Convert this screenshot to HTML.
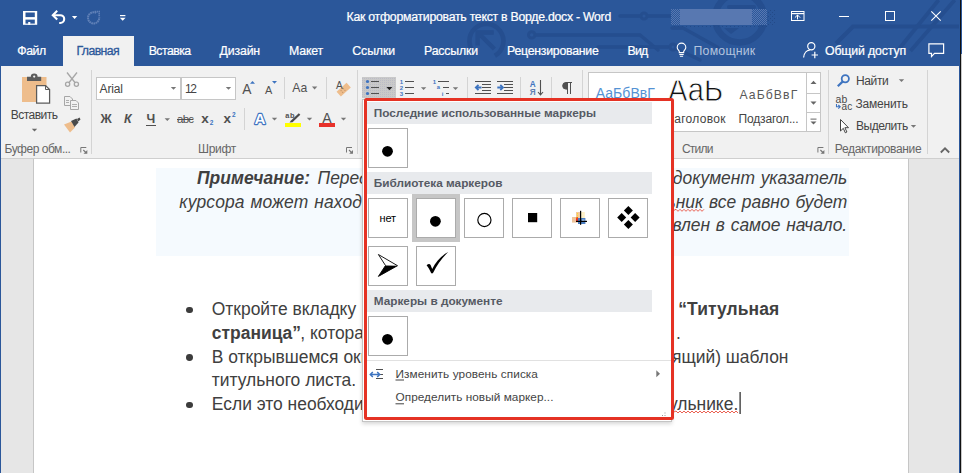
<!DOCTYPE html>
<html><head><meta charset="utf-8"><title>Word</title>
<style>
html,body{margin:0;padding:0;}
body{width:962px;height:473px;overflow:hidden;position:relative;background:#e6e6e6;font-family:"Liberation Sans",sans-serif;}
.a{position:absolute;}
.t{position:absolute;white-space:pre;line-height:1;font-family:"Liberation Sans",sans-serif;}
svg{position:absolute;overflow:visible;}
.doc{position:absolute;white-space:pre;line-height:1;font-size:17.45px;color:#404040;font-family:"Liberation Sans",sans-serif;}
.thumb{position:absolute;width:38px;height:38px;border:1px solid #ababab;background:#fff;}
.hdr{position:absolute;left:367px;width:285px;height:22px;background:#e8eaed;}
.vsep{position:absolute;width:1px;background:#d2d2d2;}

</style></head><body>
<!-- window chrome -->
<div class="a" style="left:0;top:0;width:962px;height:66px;background:#2b579a"></div>
<svg style="left:0;top:0" width="962" height="66" viewBox="0 0 962 66">
<defs>
<pattern id="chk" width="2" height="2" patternUnits="userSpaceOnUse"><rect width="2" height="2" fill="#2b579a"/><rect width="1" height="1" fill="#5878b1"/><rect x="1" y="1" width="1" height="1" fill="#5878b1"/></pattern>
<pattern id="chk2" width="4" height="4" patternUnits="userSpaceOnUse"><rect width="1" height="1" fill="#234a88"/><rect x="2" y="2" width="1" height="1" fill="#234a88"/></pattern>
<clipPath id="tclip"><rect x="1" y="0" width="958" height="66"/></clipPath>
</defs>
<!-- decorative background pattern -->
<g clip-path="url(#tclip)" fill="none" stroke="#254e8f" stroke-width="4" stroke-linecap="round">
<path d="M494.9 55.7 A17 17 0 1 0 475.5 54" stroke-width="4.6" stroke-linecap="butt"/>
<path d="M494.4 49 L479 33.8 M477.6 45.5 V32.5 H493.8" stroke-width="4.4" stroke-linecap="butt" stroke-linejoin="miter"/>
<circle cx="531.7" cy="34.9" r="3.2" stroke-width="3"/>
<path d="M536 35 H640 L658 50" stroke-width="3.5"/>
<circle cx="644" cy="16" r="3" stroke-width="3"/>
<path d="M620 16 H640 M648 16 H671" stroke-width="3.5"/>
<path d="M598 47 H668" stroke-width="3.5"/>
<circle cx="673" cy="47" r="3" stroke-width="3"/>
<circle cx="739.6" cy="18" r="24.5" stroke-width="6.5"/>
<path d="M729 7 H754" stroke-width="4"/>
<path d="M724 28 L731 34 L739 28z" fill="#254e8f" stroke="none"/>
<path d="M672 28 H683 L718 47.5" stroke-width="3.5"/>
<path d="M676 48.5 L700 60" stroke-width="3.5"/>
<path d="M836 43.5 L853 26.5 H962" stroke-width="4" stroke-linecap="butt"/>
<path d="M897.3 51 L938.6 0" stroke-width="3.8" stroke-linecap="butt"/>
<path d="M910.5 51 L954.7 0" stroke-width="3.8" stroke-linecap="butt"/>
<path d="M0 33 H20 L40 50" stroke-width="3" opacity="0"/>
</g>
<!-- user name smudge -->
<rect x="671" y="9" width="9" height="16" fill="url(#chk)"/>
<rect x="680" y="9" width="72" height="16" fill="#5878b1"/>
<rect x="752" y="9" width="15" height="16" fill="url(#chk)"/>
<rect x="767" y="10" width="9" height="16" fill="url(#chk2)"/>
<rect x="674" y="25" width="93" height="2" fill="url(#chk2)"/>
<!-- SAVE -->
<rect x="23" y="11" width="14.2" height="13.8" fill="#fff"/>
<rect x="25.5" y="12.5" width="9.3" height="4.6" fill="#2b579a"/>
<rect x="25.5" y="19.6" width="9.3" height="4" fill="#2b579a"/>
<rect x="28.2" y="22" width="2.1" height="2.8" fill="#fff"/>
<!-- UNDO -->
<g fill="none" stroke="#fff" stroke-width="2.1">
<path d="M57.2 10.8 L52.8 15.2 L57.2 19.6"/>
<path d="M53.4 15.2 H60.3 a3.9 3.9 0 0 1 3.9 3.9 a3.9 3.9 0 0 1 -3.9 3.9 H59.2"/>
</g>
<path d="M71.9 15.9 h5.4 l-2.7 3z" fill="#fff"/>
<!-- REDO disabled -->
<g fill="none" stroke="#6080b7" stroke-width="2" stroke-dasharray="1.7 0.5">
<path d="M96.2 12.9 A5.6 5.6 0 1 0 99.2 17.3"/>
</g>
<path d="M94.6 11.6 h4.6 v4.6" fill="none" stroke="#6080b7" stroke-width="1.6" stroke-dasharray="1.4 0.6"/>
<!-- customize -->
<rect x="120" y="15" width="5.4" height="1.2" fill="#fff"/>
<path d="M119.8 17.8 h5.8 l-2.9 3z" fill="#fff"/>
<!-- ribbon display options -->
<g fill="none" stroke="#fff" stroke-width="1">
<rect x="791.5" y="11.5" width="12.5" height="9"/>
<path d="M791.5 13.6 H804" stroke-width="1.2"/>
<path d="M797.5 19.4 V15 M794.9 17.6 L797.5 15 L800.1 17.6"/>
</g>
<!-- min / max / close -->
<rect x="839" y="16" width="10" height="1" fill="#fff"/>
<rect x="885.5" y="11.5" width="9" height="9" fill="none" stroke="#fff" stroke-width="1"/>
<path d="M931.3 11.3 L940.7 20.7 M940.7 11.3 L931.3 20.7" stroke="#fff" stroke-width="1.1" fill="none"/>
<!-- bulb -->
<g fill="none" stroke="#fff" stroke-width="1.1">
<path d="M679.3 52.6 v-1 c0 -1.2 -2.1 -2.2 -2.1 -4.2 a4.3 4.3 0 0 1 8.6 0 c0 2 -2.1 3 -2.1 4.2 v1z"/>
<path d="M679.3 54.5 h4.4 M679.9 56.3 h3.2"/>
</g>
<!-- person + -->
<g fill="none" stroke="#fff" stroke-width="1.2">
<circle cx="811.3" cy="46.3" r="3.6"/>
<path d="M803.6 57.5 c0.5 -5 3.6 -7.3 6.2 -7.4"/>
<path d="M814.8 51.8 v6.4 M811.6 55 h6.4"/>
</g>
<!-- comment -->
<path d="M928.9 43.9 H943.6 V53.4 H934.5 L931.5 56.6 V53.4 H928.9 Z" fill="none" stroke="#fff" stroke-width="1.2"/>
</svg>

<div class="a" style="left:63px;top:36px;width:71px;height:30px;background:#f1f1f1"></div>
<div class="a" style="left:1px;top:66px;width:958px;height:92px;background:#f1f1f1"></div>
<div class="a" style="left:1px;top:158px;width:958px;height:1px;background:#cfcfcf"></div>
<svg style="left:0;top:0" width="962" height="160" viewBox="0 0 962 160">
<defs>
<pattern id="dots" width="2" height="2" patternUnits="userSpaceOnUse"><rect width="2" height="2" fill="#c9c9c9"/><rect width="1" height="1" fill="#bcbcc6"/></pattern>
</defs>
<!-- group separators -->
<g fill="#d4d4d4">
<rect x="91" y="70" width="1" height="84"/>
<rect x="357" y="70" width="1" height="84"/>
<rect x="582" y="70" width="1" height="84"/>
<rect x="828" y="70" width="1" height="84"/>
<rect x="927" y="70" width="1" height="84"/>
<!-- small separators -->
<rect x="284" y="77" width="1" height="22"/>
<rect x="326" y="77" width="1" height="22"/>
<rect x="244" y="108" width="1" height="22"/>
<rect x="467" y="77" width="1" height="22"/>
<rect x="520" y="77" width="1" height="22"/>
<rect x="551" y="77" width="1" height="22"/>
</g>
<!-- PASTE -->
<g>
<rect x="22" y="77" width="24.5" height="25" fill="#eebd8c"/>
<path d="M27 81 v-4.2 h3.8 a3.4 3.2 0 0 1 6.8 0 h3.6 v4.2z" fill="#5b5b5b"/>
<circle cx="34.2" cy="76.6" r="1.1" fill="#f1f1f1"/>
<path d="M36.6 85.6 h9 l4 4 v13.6 h-13z" fill="#fff" stroke="#5b5b5b" stroke-width="1.25"/>
<path d="M45.5 85.5 v4 h4" fill="none" stroke="#5b5b5b" stroke-width="1"/>
<path d="M31.8 128.8 h5.4 l-2.7 2.8z" fill="#6a6a6a"/>
</g>
<!-- SCISSORS (disabled) -->
<g stroke="#a6a6a6" fill="none" stroke-width="1.3">
<path d="M67 72.5 L75.3 83"/><path d="M77 72.5 L68.7 83"/>
<circle cx="67.6" cy="84.3" r="2.1"/><circle cx="76.4" cy="84.3" r="2.1"/>
</g>
<!-- COPY (disabled) -->
<g stroke="#a6a6a6" fill="#f1f1f1" stroke-width="1">
<path d="M64.5 96.5 h5.5 l2.5 2.5 v6.5 h-8z"/>
<path d="M70.5 100.5 h5.5 l2.5 2.5 v6.5 h-8z"/>
<path d="M66 100.5 h3 M66 102.5 h3 M72 104.5 h5 M72 106.5 h5" stroke-width="0.9"/>
</g>
<!-- FORMAT PAINTER -->
<g>
<path d="M64 124.5 L71.5 121.5 L75 127.5 L70 132.5 Z" fill="#eebd8c"/>
<path d="M71 121 L76.5 118.5 L78.5 122.5 L74.5 127 Z" fill="#4a4a4a"/>
<path d="M77 119 L79.5 117.5 L80.5 119.5 L78.3 121.5 Z" fill="#4a4a4a"/>
</g>
<!-- font boxes -->
<rect x="96.5" y="77.5" width="84" height="22" fill="#fff" stroke="#c6c6c6"/>
<rect x="181.5" y="77.5" width="54" height="22" fill="#fff" stroke="#c6c6c6"/>
<g fill="#777">
<path d="M170.8 87 h5.4 l-2.7 2.8z"/>
<path d="M225.8 87 h5.4 l-2.7 2.8z"/>
<path d="M164.6 118.2 h5.4 l-2.7 2.8z"/>
<path d="M311.9 86.6 h5.4 l-2.7 2.8z"/>
<path d="M271.8 117.8 h5.4 l-2.7 2.8z"/>
<path d="M306.8 117.8 h5.4 l-2.7 2.8z"/>
<path d="M340.8 117.8 h5.4 l-2.7 2.8z"/>
<path d="M420.9 87.2 h5.4 l-2.7 2.8z"/>
<path d="M452.8 87.2 h5.4 l-2.7 2.8z"/>
<path d="M898.8 79.2 h5.4 l-2.7 2.8z"/>
<path d="M910.8 125 h5.4 l-2.7 2.8z"/>
</g>
<!-- grow/shrink font triangles -->
<path d="M250 83.7 L252.5 81 L255 83.7z" fill="#3e74c0"/>
<path d="M272 81 L277 81 L274.5 83.7z" fill="#3e74c0"/>
<!-- clear formatting eraser -->
<g transform="rotate(-42 343.7 89.6)">
<rect x="337" y="86.4" width="13.4" height="6.4" fill="#eebd8c"/>
<rect x="340.5" y="88" width="1.2" height="1.2" fill="#c9996a"/><rect x="343.5" y="88" width="1.2" height="1.2" fill="#c9996a"/><rect x="340.5" y="90.4" width="1.2" height="1.2" fill="#c9996a"/><rect x="343.5" y="90.4" width="1.2" height="1.2" fill="#c9996a"/>
</g>
<!-- text effects A -->
<text x="254.6" y="124" font-family="Liberation Sans, sans-serif" font-size="15.5" font-weight="700" fill="#fff" stroke="#3e74c0" stroke-width="2.3" stroke-linejoin="round" paint-order="stroke" textLength="11" lengthAdjust="spacingAndGlyphs">A</text>

<rect x="146" y="125" width="10" height="1" fill="#505050"/>
<!-- highlight -->
<rect x="285" y="123" width="16" height="4" fill="#ffff00"/>
<path d="M289.5 122.5 L291 120.5 L298.8 113.2 L300.3 114.8 L292.5 122.3 Z" fill="#4a4a4a"/>
<!-- font color -->
<rect x="319" y="123" width="16" height="4" fill="#e8312a"/>
<!-- BULLETS button -->
<rect x="362" y="77" width="34" height="21" fill="url(#dots)"/>
<g fill="#3e74c0"><circle cx="367.5" cy="81.5" r="1.6"/><circle cx="367.5" cy="87.5" r="1.6"/><circle cx="367.5" cy="93.5" r="1.6"/></g>
<g fill="#505050"><rect x="371" y="81" width="8" height="1"/><rect x="371" y="87" width="8" height="1"/><rect x="371" y="93" width="8" height="1"/></g>
<path d="M386.4 87 h6 l-3 3.2z" fill="#222"/>
<!-- NUMBERED -->
<g fill="#505050"><rect x="405" y="81" width="9" height="1"/><rect x="405" y="87" width="9" height="1"/><rect x="405" y="93" width="9" height="1"/></g>
<g fill="#3e74c0" font-family="Liberation Sans, sans-serif" font-size="5.8" font-weight="700">
<text x="399.8" y="83.6" textLength="3.4" lengthAdjust="spacingAndGlyphs">1</text><text x="399.8" y="89.6" textLength="3.4" lengthAdjust="spacingAndGlyphs">2</text><text x="399.8" y="95.6" textLength="3.4" lengthAdjust="spacingAndGlyphs">3</text>
</g>
<!-- MULTILEVEL -->
<g fill="#505050"><rect x="438" y="81" width="11" height="1"/><rect x="443" y="87" width="6" height="1"/><rect x="446" y="93" width="3" height="1"/></g>
<g fill="#3e74c0" font-family="Liberation Sans, sans-serif" font-size="5.8" font-weight="700">
<text x="432.8" y="83.8" textLength="3.4" lengthAdjust="spacingAndGlyphs">1</text><text x="436.8" y="89.4">a</text><text x="441.7" y="95.6">i</text>
</g>
<!-- DEC INDENT -->
<g fill="#505050">
<rect x="475" y="81" width="16" height="1"/><rect x="482" y="84" width="9" height="1"/><rect x="482" y="87" width="9" height="1"/><rect x="482" y="90" width="9" height="1"/><rect x="475" y="93" width="16" height="1"/>
<rect x="497" y="81" width="16" height="1"/><rect x="504" y="84" width="9" height="1"/><rect x="504" y="87" width="9" height="1"/><rect x="504" y="90" width="9" height="1"/><rect x="497" y="93" width="16" height="1"/>
</g>
<g fill="none" stroke="#3e74c0" stroke-width="1.8">
<path d="M481.5 87.5 H476 M478.5 84.8 L475.8 87.5 L478.5 90.2"/>
<path d="M497.3 87.5 H502.8 M500.3 84.8 L503 87.5 L500.3 90.2"/>
</g>
<!-- SORT -->
<g font-family="Liberation Sans, sans-serif" font-size="8.2" font-weight="700">
<text x="529.8" y="86.6" fill="#3e74c0">A</text><text x="529.8" y="95" fill="#5d7fb3">Я</text>
</g>
<path d="M540.5 80 V94.5 M538 92 L540.5 94.8 L543 92" fill="none" stroke="#505050" stroke-width="1.1"/>
<!-- PILCROW -->
<path d="M567.5 82.5 V94 M570.5 82.5 V94 M572 82.5 H566 a3.3 3.3 0 0 0 0 6.6 h1.5 v-6.6z" fill="#505050" stroke="#505050" stroke-width="1"/>
<!-- STYLES gallery -->
<rect x="588.5" y="72.5" width="218" height="59" fill="#fff" stroke="#c6c6c6"/>
<g fill="#fff" stroke="#c6c6c6">
<rect x="806.5" y="72.5" width="14" height="21"/>
<rect x="806.5" y="93.5" width="14" height="19"/>
<rect x="806.5" y="112.5" width="14" height="19"/>
</g>
<g fill="#666">
<path d="M810.5 84 h6 l-3 -3.2z"/>
<path d="M810.5 101.6 h6 l-3 3.2z"/>
<rect x="810.5" y="118.6" width="6" height="1"/>
<path d="M810.5 121.4 h6 l-3 3.2z"/>
</g>
<!-- dialog launchers -->
<path d="M80.8 152.5 v-5 h5.5" fill="none" stroke="#777" stroke-width="1"/><path d="M83.3 150 L86.3 153" fill="none" stroke="#777" stroke-width="1.1"/><path d="M83.5 153.8 h3.8 v-3.8z" fill="#777"/>
<path d="M346.5 152.5 v-5 h5.5" fill="none" stroke="#777" stroke-width="1"/><path d="M349 150 L352 153" fill="none" stroke="#777" stroke-width="1.1"/><path d="M349.2 153.8 h3.8 v-3.8z" fill="#777"/>
<path d="M817.9 152.5 v-5 h5.5" fill="none" stroke="#777" stroke-width="1"/><path d="M820.4 150 L823.4 153" fill="none" stroke="#777" stroke-width="1.1"/><path d="M820.6 153.8 h3.8 v-3.8z" fill="#777"/>
<!-- collapse caret -->
<path d="M940.8 152.5 L945 148.3 L949.2 152.5" fill="none" stroke="#666" stroke-width="1.8"/>
<!-- FIND icon -->
<g fill="none" stroke="#3e74c0" stroke-width="1.8">
<circle cx="845.3" cy="78.7" r="3.6"/><path d="M842.6 81.6 L837.8 86.2" stroke-width="2.2"/>
</g>
<!-- REPLACE icon -->
<g font-family="Liberation Sans, sans-serif" font-size="10" fill="#4a4a4a">
<text x="835.6" y="102.6" textLength="11.6" lengthAdjust="spacingAndGlyphs">ab</text><text x="841.6" y="109.6" textLength="10.6" lengthAdjust="spacingAndGlyphs">ac</text>
</g>
<path d="M836.5 104 v2.8 h3.5 M838.3 105 L840.2 106.8 L838.3 108.6" fill="none" stroke="#3e74c0" stroke-width="1.1"/>
<!-- SELECT cursor -->
<path d="M840.5 119.5 V131 L843.3 128.3 L845.3 132.8 L846.9 132 L844.9 127.7 H848.5 Z" fill="#fff" stroke="#444" stroke-width="1"/>
</svg>

<!-- doc area -->
<div class="a" style="left:33px;top:159px;width:876px;height:314px;background:#fff;border-left:1px solid #c6c6c6;border-right:1px solid #c6c6c6;box-sizing:border-box"></div>
<div class="a" style="left:156px;top:168px;width:693px;height:88px;background:#f5fafe"></div>
<span class="t" style="left:196.9px;top:170.43px;font-size:17.45px;color:#404040;letter-spacing:0.067px;font-weight:700;font-style:italic;">Примечание:</span>
<span class="t" style="left:311.8px;top:170.43px;font-size:17.45px;color:#404040;letter-spacing:0.000px;font-style:italic;word-spacing:0.9px;"> Перед вставкой</span>
<span class="t" style="left:658.0px;top:170.43px;font-size:17.45px;color:#404040;letter-spacing:0.000px;font-style:italic;word-spacing:0.9px;">в документ указатель</span>
<span class="t" style="left:179.3px;top:193.63px;font-size:17.45px;color:#404040;letter-spacing:0.000px;font-style:italic;word-spacing:0.9px;letter-spacing:0.12px;">курсора может находиться в</span>
<span class="t" style="left:609.8px;top:193.63px;font-size:17.45px;color:#404040;letter-spacing:0.000px;font-style:italic;word-spacing:0.9px;">титульник все равно будет</span>
<span class="t" style="left:633.6px;top:216.83px;font-size:17.45px;color:#404040;letter-spacing:0.000px;font-style:italic;word-spacing:0.9px;">добавлен в самое начало.</span>
<span class="t" style="left:211.8px;top:301.33px;font-size:17.45px;color:#404040;letter-spacing:0.000px;">Откройте вкладку</span>
<span class="t" style="left:678.3px;top:301.33px;font-size:17.45px;color:#404040;letter-spacing:0.092px;font-weight:700;">“Титульная</span>
<span class="t" style="left:211.8px;top:324.93px;font-size:17.45px;color:#404040;letter-spacing:0.000px;font-weight:700;">страница”</span>
<span class="t" style="left:300.3px;top:324.93px;font-size:17.45px;color:#404040;letter-spacing:0.000px;">, которая находится</span>
<span class="t" style="left:676.1px;top:324.93px;font-size:17.45px;color:#404040;letter-spacing:0.000px;">.</span>
<span class="t" style="left:211.8px;top:348.53px;font-size:17.45px;color:#404040;letter-spacing:0.000px;">В открывшемся окне выберите</span>
<span class="t" style="left:615.0px;top:348.53px;font-size:17.45px;color:#404040;letter-spacing:0.000px;">подходящий) шаблон</span>
<span class="t" style="left:211.8px;top:372.13px;font-size:17.45px;color:#404040;letter-spacing:0.000px;">титульного листа.</span>
<span class="t" style="left:211.8px;top:395.73px;font-size:17.45px;color:#404040;letter-spacing:0.000px;">Если это необходимо, измените</span>
<span class="t" style="left:628.9px;top:395.73px;font-size:17.45px;color:#404040;letter-spacing:0.000px;">в титульнике.</span>
<svg style="left:0;top:0" width="962" height="473" viewBox="0 0 962 473">
<path d="M674 210.3 L676 209.3 L678 211.3 L680 209.3 L682 211.3 L684 209.3 L686 211.3 L688 209.3 L690 211.3 L692 209.3 L694 211.3 L696 209.3 L698 211.3 L700 209.3 L702 211.3 L704 209.3" fill="none" stroke="#e8503f" stroke-width="0.9"/>
<path d="M674 412 L676 411 L678 413 L680 411 L682 413 L684 411 L686 413 L688 411 L690 413 L692 411 L694 413 L696 411 L698 413 L700 411 L702 413 L704 411 L706 413 L708 411 L710 413 L712 411 L714 413 L716 411 L718 413 L720 411 L722 413 L724 411 L726 413 L728 411 L730 413 L732 411 L734 413 L736 411 L738 413" fill="none" stroke="#e8503f" stroke-width="0.9"/>
<rect x="739.5" y="392" width="1.2" height="22" fill="#222"/>
</svg>
<!-- doc bullets -->
<div class="a" style="left:186px;top:306.5px;width:6.8px;height:6.8px;border-radius:50%;background:#3c3c3c"></div>
<div class="a" style="left:186px;top:354px;width:6.8px;height:6.8px;border-radius:50%;background:#3c3c3c"></div>
<div class="a" style="left:186px;top:401.5px;width:6.8px;height:6.8px;border-radius:50%;background:#3c3c3c"></div>
<!-- window borders -->
<div class="a" style="left:0;top:0;width:1px;height:473px;background:#2b579a"></div>
<div class="a" style="left:959px;top:0;width:1px;height:473px;background:#2b579a"></div>
<div class="a" style="left:960px;top:0;width:1px;height:473px;background:#111"></div>
<div class="a" style="left:961px;top:54px;width:1px;height:419px;background:#c8c8c8"></div>

<span class="t" style="left:346.6px;top:10.99px;font-size:12.3px;color:#fff;letter-spacing:-0.269px;-webkit-text-stroke:0.22px #fff;">Как отформатировать текст в Ворде.docx - Word</span>
<span class="t" style="left:17.3px;top:45.39px;font-size:12.3px;color:#fff;letter-spacing:-0.484px;-webkit-text-stroke:0.22px #fff;">Файл</span>
<span class="t" style="left:76.5px;top:45.39px;font-size:12.3px;color:#2b579a;letter-spacing:-0.616px;-webkit-text-stroke:0.3px #2b579a;">Главная</span>
<span class="t" style="left:148.7px;top:45.39px;font-size:12.3px;color:#fff;letter-spacing:-0.546px;-webkit-text-stroke:0.22px #fff;">Вставка</span>
<span class="t" style="left:219.6px;top:45.39px;font-size:12.3px;color:#fff;letter-spacing:-0.157px;-webkit-text-stroke:0.22px #fff;">Дизайн</span>
<span class="t" style="left:289.0px;top:45.39px;font-size:12.3px;color:#fff;letter-spacing:-0.163px;-webkit-text-stroke:0.22px #fff;">Макет</span>
<span class="t" style="left:352.3px;top:45.39px;font-size:12.3px;color:#fff;letter-spacing:-0.099px;-webkit-text-stroke:0.22px #fff;">Ссылки</span>
<span class="t" style="left:424.0px;top:45.39px;font-size:12.3px;color:#fff;letter-spacing:-0.150px;-webkit-text-stroke:0.22px #fff;">Рассылки</span>
<span class="t" style="left:507.0px;top:45.39px;font-size:12.3px;color:#fff;letter-spacing:-0.247px;-webkit-text-stroke:0.22px #fff;">Рецензирование</span>
<span class="t" style="left:627.5px;top:45.39px;font-size:12.3px;color:#fff;letter-spacing:-0.750px;-webkit-text-stroke:0.22px #fff;">Вид</span>
<span class="t" style="left:693.5px;top:45.39px;font-size:12.3px;color:#b4c4de;letter-spacing:0.232px;">Помощник</span>
<span class="t" style="left:825.0px;top:45.39px;font-size:12.3px;color:#fff;letter-spacing:-0.135px;-webkit-text-stroke:0.22px #fff;">Общий доступ</span>
<span class="t" style="left:10.8px;top:109.24px;font-size:12px;color:#444;letter-spacing:-0.534px;">Вставить</span>
<span class="t" style="left:4.5px;top:143.04px;font-size:12px;color:#666;letter-spacing:-0.465px;">Буфер обм...</span>
<span class="t" style="left:198.0px;top:143.04px;font-size:12px;color:#666;letter-spacing:-0.297px;">Шрифт</span>
<span class="t" style="left:682.0px;top:143.04px;font-size:12px;color:#666;letter-spacing:-0.796px;">Стили</span>
<span class="t" style="left:834.8px;top:143.04px;font-size:12px;color:#666;letter-spacing:-0.352px;">Редактирование</span>
<span class="t" style="left:99.5px;top:83.04px;font-size:12px;color:#444;letter-spacing:-0.123px;">Arial</span>
<span class="t" style="left:185.0px;top:83.04px;font-size:12px;color:#444;letter-spacing:-1.330px;">12</span>
<span class="t" style="left:855.9px;top:75.24px;font-size:12px;color:#444;letter-spacing:-0.350px;">Найти</span>
<span class="t" style="left:855.5px;top:98.04px;font-size:12px;color:#444;letter-spacing:-0.217px;">Заменить</span>
<span class="t" style="left:856.0px;top:120.24px;font-size:12px;color:#444;letter-spacing:-0.457px;">Выделить</span>
<span class="t" style="left:595.7px;top:86.35px;font-size:14px;color:#5492d4;letter-spacing:0.051px;">АаБбВвГ</span>
<span class="t" style="left:739.4px;top:89.17px;font-size:12.2px;color:#595959;letter-spacing:1.109px;">АаБбВвГ</span>
<span class="t" style="left:666.6px;top:113.04px;font-size:12px;color:#444;letter-spacing:0.320px;">Заголовок</span>
<span class="t" style="left:738.6px;top:113.04px;font-size:12px;color:#444;letter-spacing:-0.177px;">Подзагол...</span>
<span class="t" style="left:668.3px;top:73.14px;font-size:33.5px;color:#111;letter-spacing:0.000px;clip-path:inset(7.7px 0 0 0);-webkit-text-stroke:0.8px #fff;transform-origin:0 0;transform:scaleX(0.8699);">АаБ</span>
<span class="t" style="left:242.2px;top:82.72px;font-size:13.8px;color:#505050;letter-spacing:0.397px;">A</span>
<span class="t" style="left:265.1px;top:85.17px;font-size:10.9px;color:#505050;letter-spacing:0.734px;">A</span>
<span class="t" style="left:292.3px;top:82.17px;font-size:12.2px;color:#505050;letter-spacing:-0.011px;">Aa</span>
<span class="t" style="left:336.0px;top:80.83px;font-size:10px;color:#505050;letter-spacing:-0.172px;">A</span>
<span class="t" style="left:100.6px;top:113.30px;font-size:12.4px;color:#505050;letter-spacing:1.197px;font-weight:700;">Ж</span>
<span class="t" style="left:124.0px;top:113.30px;font-size:12.4px;color:#505050;letter-spacing:1.275px;font-weight:700;font-style:italic;">К</span>
<span class="t" style="left:146.6px;top:113.30px;font-size:12.4px;color:#505050;letter-spacing:-0.119px;font-weight:700;">Ч</span>
<span class="t" style="left:177.0px;top:114.07px;font-size:11.5px;color:#505050;letter-spacing:-0.716px;text-decoration:line-through;">abc</span>
<span class="t" style="left:201.2px;top:112.37px;font-size:13.5px;color:#505050;letter-spacing:0.284px;font-weight:700;">x</span>
<span class="t" style="left:209.7px;top:120.20px;font-size:6.5px;color:#3e74c0;letter-spacing:-0.025px;font-weight:700;">2</span>
<span class="t" style="left:223.4px;top:112.37px;font-size:13.5px;color:#505050;letter-spacing:0.284px;font-weight:700;">x</span>
<span class="t" style="left:231.9px;top:112.40px;font-size:6.5px;color:#3e74c0;letter-spacing:-0.425px;font-weight:700;">2</span>
<span class="t" style="left:285.2px;top:111.94px;font-size:7.4px;color:#505050;letter-spacing:0.588px;font-weight:700;">ab</span>
<span class="t" style="left:322.3px;top:111.35px;font-size:14px;color:#505050;letter-spacing:0.556px;">A</span>
<!-- dropdown -->
<div class="a" style="left:362px;top:99px;width:310px;height:323px;box-sizing:border-box;border:1px solid #c4c4c4;background:#fff;box-shadow:0 2px 4px rgba(0,0,0,0.16)"></div>
<div class="a" style="left:364px;top:98px;width:310px;height:322px;box-sizing:border-box;border:3px solid #e53224;border-radius:2.5px;background:#fff"></div>
<div class="hdr" style="top:102px"></div>
<div class="hdr" style="top:172px"></div>
<div class="hdr" style="top:290px"></div>
<div class="thumb" style="left:368px;top:128px"></div>
<div class="thumb" style="left:368px;top:198px"></div>
<div class="a" style="left:412px;top:194px;width:48px;height:48px;background:#c6c6c6"></div>
<div class="thumb" style="left:416px;top:198px"></div>
<div class="thumb" style="left:464px;top:198px"></div>
<div class="thumb" style="left:512px;top:198px"></div>
<div class="thumb" style="left:560px;top:198px"></div>
<div class="thumb" style="left:608px;top:198px"></div>
<div class="thumb" style="left:368px;top:246px"></div>
<div class="thumb" style="left:416px;top:246px"></div>
<div class="thumb" style="left:368px;top:316px"></div>
<div class="a" style="left:367px;top:360px;width:304px;height:1px;background:#e1e1e1"></div>

<svg style="left:0;top:0" width="962" height="473" viewBox="0 0 962 473">
<!-- recent bullet -->
<circle cx="387.5" cy="151.3" r="5.4" fill="#000"/>
<!-- library: filled bullet -->
<circle cx="435.4" cy="221.3" r="5.4" fill="#000"/>
<!-- hollow circle -->
<circle cx="484.4" cy="220" r="6.6" fill="#fff" stroke="#000" stroke-width="1.15"/>
<!-- square -->
<rect x="528" y="213" width="9.2" height="9.2" fill="#000"/>
<!-- picture bullet -->
<g>
<rect x="576" y="212" width="4.5" height="6" fill="#f3c89f"/>
<rect x="580.5" y="212" width="4.3" height="6" fill="#fdf0c8"/>
<rect x="572" y="217" width="5.7" height="5.6" fill="#efc39a"/>
<rect x="576" y="217" width="2" height="4" fill="#e8312a"/>
<rect x="578" y="218" width="7.4" height="6" fill="#4a7ec2"/>
<rect x="582" y="219.5" width="2.5" height="2" fill="#a9c4e6"/>
<rect x="577" y="213.3" width="1" height="1" fill="#ffe600"/><rect x="577" y="215.3" width="1" height="1" fill="#ffe600"/><rect x="576.3" y="217.2" width="1" height="1" fill="#ffe600"/>
<rect x="580" y="210.8" width="1.2" height="14" fill="#000"/>
<rect x="576" y="220.8" width="11" height="1.2" fill="#000"/>
</g>
<!-- four diamonds -->
<g fill="#000">
<path d="M628.4 206.1 L632.9 210.6 L628.4 215.1 L623.9 210.6z"/>
<path d="M621.7 213 L626.2 217.5 L621.7 222 L617.2 217.5z"/>
<path d="M635.1 213 L639.6 217.5 L635.1 222 L630.6 217.5z"/>
<path d="M628.4 219.9 L632.9 224.4 L628.4 228.9 L623.9 224.4z"/>
</g>
<!-- arrow bullet -->
<path d="M378.4 254.5 L397.5 265.7 L378.4 276.4 L385.5 265.5 Z" fill="#fff" stroke="#000" stroke-width="0.9" stroke-linejoin="miter"/>
<path d="M397.5 265.7 L378.4 276.4 L385.5 265.5 Z" fill="#000"/>
<!-- check -->
<path d="M426.6 265.2 C428.4 263.6 429.6 263.4 430.6 265 L432.2 269 C436 261.5 441.5 255.5 448.2 252 C442 258 437 265 433.3 272.6 C432.6 273.6 431.6 273.8 431 272.8 C429.8 270 428.4 267.2 426.6 265.2 Z" fill="#000"/>
<!-- in-document bullet -->
<circle cx="387.5" cy="339.3" r="5.4" fill="#000"/>
<!-- change list level icon -->
<g fill="#505050">
<rect x="376" y="369" width="7" height="1"/><rect x="380" y="374" width="3" height="1"/><rect x="376" y="378" width="7" height="1"/>
</g>
<path d="M370.5 374.5 H379.5 M372.8 372 L370.3 374.5 L372.8 377 M377.2 372 L379.7 374.5 L377.2 377" fill="none" stroke="#3e74c0" stroke-width="1.5"/>
<!-- submenu arrow -->
<path d="M656.3 370.2 L660 373.7 L656.3 377.2z" fill="#777"/>
<!-- grip -->
<g fill="#9a9a9a"><rect x="664.5" y="412.5" width="1" height="1"/><rect x="664.5" y="415" width="1" height="1"/><rect x="662" y="415" width="1" height="1"/></g>
<!-- mnemonic underlines -->
<rect x="395.5" y="379.5" width="8.5" height="1" fill="#444"/>
<rect x="395.5" y="403.3" width="8.5" height="1" fill="#444"/>
</svg>

<span class="t" style="left:373.8px;top:107.81px;font-size:11.8px;color:#565a64;letter-spacing:-0.025px;font-weight:700;">Последние использованные маркеры</span>
<span class="t" style="left:373.8px;top:177.81px;font-size:11.8px;color:#565a64;letter-spacing:-0.018px;font-weight:700;">Библиотека маркеров</span>
<span class="t" style="left:373.8px;top:295.81px;font-size:11.8px;color:#565a64;letter-spacing:-0.018px;font-weight:700;">Маркеры в документе</span>
<span class="t" style="left:379.5px;top:213.49px;font-size:11px;color:#000;letter-spacing:-0.125px;">нет</span>
<span class="t" style="left:395.5px;top:368.71px;font-size:11.8px;color:#444;letter-spacing:0.075px;">Изменить уровень списка</span>
<span class="t" style="left:395.5px;top:392.41px;font-size:11.8px;color:#444;letter-spacing:0.040px;">Определить новый маркер...</span>

</body></html>
